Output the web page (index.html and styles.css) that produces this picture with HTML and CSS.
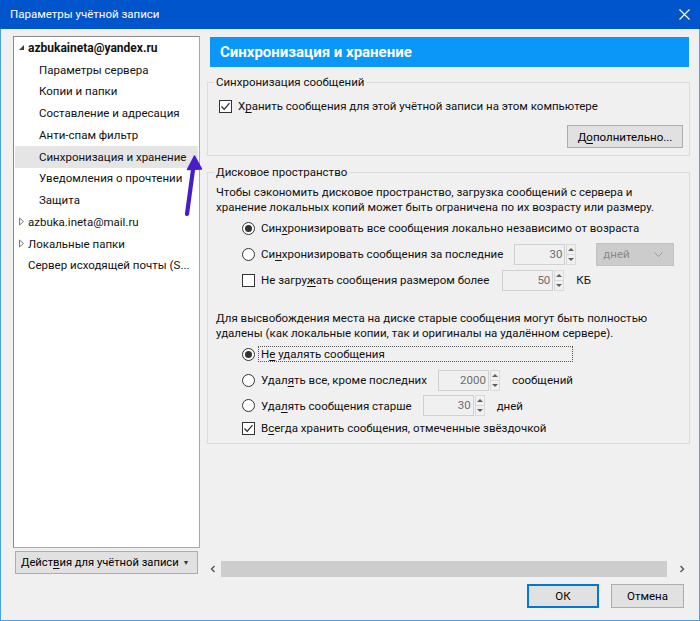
FILE: index.html
```html
<!DOCTYPE html>
<html lang="ru">
<head>
  <meta charset="UTF-8">
  <title>Параметры учётной записи</title>
  <link rel="stylesheet" href="styles.css">
</head>
<body>
  <div class="window">
    <!-- Заголовок окна -->
    <div class="titlebar">
      <span class="title">Параметры учётной записи</span>
      <svg class="close" width="11" height="11" viewBox="0 0 11 11"><path d="M0.5 0.5 L10.5 10.5 M10.5 0.5 L0.5 10.5" stroke="#fff" stroke-width="1.1"/></svg>
    </div>

    <div class="frame">
      <div class="main">
        <!-- Дерево учётных записей -->
        <div class="sidebar">
          <ul class="tree">
            <li class="account open"><span class="twisty"><svg width="7" height="7" viewBox="0 0 7 7"><path d="M6 1 L6 6 L1 6 Z" fill="#3c3c3c"/></svg></span><b>azbukaineta@yandex.ru</b></li>
            <li class="child">Параметры сервера</li>
            <li class="child">Копии и папки</li>
            <li class="child">Составление и адресация</li>
            <li class="child">Анти-спам фильтр</li>
            <li class="child selected">Синхронизация и хранение</li>
            <li class="child">Уведомления о прочтении</li>
            <li class="child">Защита</li>
            <li class="account"><span class="twisty"><svg width="7" height="9" viewBox="0 0 7 9"><path d="M1.5 1 L5.5 4.5 L1.5 8 Z" fill="none" stroke="#7a7a7a"/></svg></span>azbuka.ineta@mail.ru</li>
            <li class="account"><span class="twisty"><svg width="7" height="9" viewBox="0 0 7 9"><path d="M1.5 1 L5.5 4.5 L1.5 8 Z" fill="none" stroke="#7a7a7a"/></svg></span>Локальные папки</li>
            <li class="account"><span class="twisty"></span>Сервер исходящей почты (S...</li>
          </ul>
          <button class="btn actions"><span class="actions-label">Дейст<u>в</u>ия для учётной записи</span><span class="caret">&#9662;</span></button>
        </div>

        <!-- Панель настроек -->
        <div class="pane">
          <div class="pane-header">Синхронизация и хранение</div>

          <fieldset class="group group-sync">
            <legend>Синхронизация сообщений</legend>
            <div class="opt sync-row">
              <span class="check on"><svg width="11" height="11" viewBox="0 0 11 11"><path d="M1.5 5.5 L4.2 8.3 L9.5 2.2" fill="none" stroke="#222" stroke-width="1.2"/></svg></span>
              <span>Х<u>р</u>анить сообщения для этой учётной записи на этом компьютере</span>
            </div>
            <div class="btn-row"><button class="btn">Д<u>о</u>полнительно...</button></div>
          </fieldset>

          <fieldset class="group group-disk">
            <legend>Дисковое пространство</legend>
            <p class="note">Чтобы сэкономить дисковое пространство, загрузка сообщений с сервера и<br>хранение локальных копий может быть ограничена по их возрасту или размеру.</p>

            <div class="opt">
              <span class="radio on"></span>
              <span>Син<u>х</u>ронизировать все сообщения локально независимо от возраста</span>
            </div>
            <div class="opt">
              <span class="radio"></span>
              <span>Си<u>н</u>хронизировать сообщения за последние</span>
              <span class="spin"><span class="spin-field">30</span><span class="spin-arrows"><i class="up"></i><i class="down"></i></span></span>
              <span class="select">дней<svg width="9" height="5" viewBox="0 0 9 5"><path d="M0.5 0.5 L4.5 4.5 L8.5 0.5" fill="none" stroke="#9a9a9a"/></svg></span>
            </div>
            <div class="opt">
              <span class="check"></span>
              <span>Не загру<u>ж</u>ать сообщения размером более</span>
              <span class="spin wide-gap"><span class="spin-field">50</span><span class="spin-arrows"><i class="up"></i><i class="down"></i></span></span>
              <span class="unit">КБ</span>
            </div>

            <p class="note note-purge">Для высвобождения места на диске старые сообщения могут быть полностью<br>удалены (как локальные копии, так и оригиналы на удалённом сервере).</p>

            <div class="opt">
              <span class="radio on"></span>
              <span class="focus">Н<u>е</u> удалять сообщения</span>
            </div>
            <div class="opt">
              <span class="radio"></span>
              <span>Удал<u>я</u>ть все, кроме последних</span>
              <span class="spin"><span class="spin-field">2000</span><span class="spin-arrows"><i class="up"></i><i class="down"></i></span></span>
              <span class="unit">сообщений</span>
            </div>
            <div class="opt short">
              <span class="radio"></span>
              <span>Уда<u>л</u>ять сообщения старше</span>
              <span class="spin"><span class="spin-field">30</span><span class="spin-arrows"><i class="up"></i><i class="down"></i></span></span>
              <span class="unit">дней</span>
            </div>
            <div class="opt last">
              <span class="check on"><svg width="11" height="11" viewBox="0 0 11 11"><path d="M1.5 5.5 L4.2 8.3 L9.5 2.2" fill="none" stroke="#222" stroke-width="1.2"/></svg></span>
              <span>В<u>с</u>егда хранить сообщения, отмеченные звёздочкой</span>
            </div>
          </fieldset>

          <!-- Горизонтальная полоса прокрутки -->
          <div class="hscroll">
            <span class="sb-btn"><svg width="6" height="8" viewBox="0 0 6 8"><path d="M4.5 1 L1.5 4 L4.5 7" fill="none" stroke="#555" stroke-width="1.4"/></svg></span>
            <span class="sb-track"><span class="sb-thumb"></span></span>
            <span class="sb-btn"><svg width="6" height="8" viewBox="0 0 6 8"><path d="M1.5 1 L4.5 4 L1.5 7" fill="none" stroke="#555" stroke-width="1.4"/></svg></span>
          </div>
        </div>
      </div>

      <div class="footer">
        <button class="btn dialog-btn default">ОК</button>
        <button class="btn dialog-btn">Отмена</button>
      </div>
    </div>

    <!-- Стрелка-указатель -->
    <svg class="pointer-arrow" width="30" height="70" viewBox="0 0 30 70">
      <path d="M13.5 16 L7 64" stroke="#4a1cc9" stroke-width="4.2" stroke-linecap="round" fill="none"/>
      <path d="M14.5 6 L7.5 19.5 L21.5 19 Z" fill="#4a1cc9" stroke="#4a1cc9" stroke-width="1.5" stroke-linejoin="round"/>
    </svg>
  </div>
</body>
</html>
```

FILE: styles.css
```css
* {
  margin: 0;
  padding: 0;
  box-sizing: border-box;
}

body {
  width: 700px;
  height: 621px;
  overflow: hidden;
  background: #f0f0f0;
  font-family: "Segoe UI", Roboto, "Noto Sans", sans-serif;
  font-size: 11.5px;
  color: #000;
}

u {
  text-decoration-thickness: 1px;
  text-underline-offset: 2px;
}

.window {
  position: relative;
  height: 621px;
  display: flex;
  flex-direction: column;
}

/* Заголовок окна */
.titlebar {
  height: 29px;
  flex: none;
  background: #0055cc;
  color: #fff;
  display: flex;
  align-items: center;
  justify-content: space-between;
  padding: 0 10px 1px 10px;
}

.frame {
  flex: 1;
  display: flex;
  flex-direction: column;
  border: 1px solid #4aa1e4;
  border-top: none;
}

.main {
  height: 548px;
  display: flex;
  gap: 7px;
  padding: 7px 9px 0 12px;
}

/* Левая колонка с деревом */
.sidebar {
  width: 187px;
  flex: none;
  display: flex;
  flex-direction: column;
}

.tree {
  list-style: none;
  height: 512px;
  background: #fff;
  border: 1px solid #8a8a8a;
  border-right-color: #a8a8a8;
  border-bottom-color: #a8a8a8;
  overflow: hidden;
}

.tree li {
  height: 21.75px;
  display: flex;
  align-items: center;
  white-space: nowrap;
  color: #111;
}

.tree .account {
  padding-left: 4px;
}

.tree .twisty {
  width: 10px;
  display: flex;
  align-items: center;
}

.tree b {
  font-size: 12px;
  font-weight: 700;
}

.tree .child {
  padding-left: 25px;
}

.tree .selected {
  background: #e5e5e5;
  margin: 0 1px;
  padding-left: 24px;
}

/* Кнопки */
.btn {
  font: inherit;
  color: #000;
  background: #e1e1e1;
  border: 1px solid #adadad;
  height: 23px;
  padding: 0 8px;
  white-space: nowrap;
}

.actions {
  margin: 3px 2px 0 2px;
  padding: 0 9px 0 5px;
  display: flex;
  align-items: center;
  justify-content: space-between;
}

.actions-label {
  font-size: 11.2px;
}

.actions .caret {
  font-size: 8px;
  color: #333;
}

/* Правая панель */
.pane {
  flex: 1;
  min-width: 0;
  display: flex;
  flex-direction: column;
}

.pane-header {
  height: 30px;
  margin: 1px 1px 0 3px;
  background: #0a97f7;
  color: #fff;
  font-size: 15px;
  font-weight: 700;
  display: flex;
  align-items: center;
  padding-left: 10px;
}

.group {
  border: 1px solid #dcdcdc;
  padding: 0 6px;
  min-width: 0;
}

.group legend {
  padding: 0 2px;
  line-height: 16px;
  color: #111;
}

.group-sync {
  margin-top: 7px;
  padding-top: 6px;
  padding-bottom: 7px;
}

.group-disk {
  margin-top: 8px;
  padding-top: 5px;
  padding-bottom: 5px;
}

.note {
  margin-left: 2px;
  line-height: 15px;
  white-space: nowrap;
  color: #111;
}

.note-purge {
  margin-top: 18px;
}

.opt {
  height: 26px;
  display: flex;
  align-items: center;
  margin-left: 28px;
  white-space: nowrap;
  color: #111;
}

.opt.short {
  height: 25px;
}

.opt.last {
  height: 20px;
}

.sync-row {
  height: 20px;
  margin-left: 5px;
}

.btn-row {
  display: flex;
  justify-content: flex-end;
  margin-top: 9px;
}

.btn-row .btn {
  width: 116px;
}

/* Флажки и переключатели */
.check,
.radio {
  width: 13px;
  height: 13px;
  flex: none;
  border: 1px solid #333;
  background: #fff;
  margin-right: 6px;
  display: flex;
  align-items: center;
  justify-content: center;
}

.radio {
  border-radius: 50%;
}

.radio.on::after {
  content: "";
  width: 7px;
  height: 7px;
  border-radius: 50%;
  background: #333;
}

.focus {
  display: inline-block;
  width: 315px;
  height: 16px;
  line-height: 14px;
  margin-left: -3px;
  padding-left: 2px;
  border: 1px dotted #555;
}

/* Поле со счётчиком */
.spin {
  display: flex;
  align-items: stretch;
  height: 21px;
  margin-left: 11px;
}

.spin.wide-gap {
  margin-left: 13px;
}

.spin-field {
  width: 51px;
  border: 1px solid #d0d0d0;
  background: #f0f0f0;
  color: #6d6d6d;
  text-align: right;
  padding-right: 2px;
  line-height: 19px;
}

.spin-arrows {
  width: 10px;
  margin-left: 1px;
  display: flex;
  flex-direction: column;
  border: 1px solid #dadada;
}

.spin-arrows i {
  flex: 1;
  display: flex;
  align-items: center;
  justify-content: center;
}

.spin-arrows .up {
  border-bottom: 1px solid #dadada;
}

.spin-arrows .up::after,
.spin-arrows .down::after {
  content: "";
  border-left: 3px solid transparent;
  border-right: 3px solid transparent;
}

.spin-arrows .up::after {
  border-bottom: 3px solid #606060;
}

.spin-arrows .down::after {
  border-top: 3px solid #606060;
}

.select {
  width: 78px;
  height: 23px;
  margin-left: 20px;
  background: #cccccc;
  border: 1px solid #c2c2c2;
  color: #8a8a8a;
  display: flex;
  align-items: center;
  justify-content: space-between;
  padding: 0 10px 0 6px;
}

.unit {
  margin-left: 12px;
}

/* Горизонтальная прокрутка */
.hscroll {
  margin-top: auto;
  margin-left: -2px;
  height: 16px;
  display: flex;
}

.sb-btn {
  width: 16px;
  display: flex;
  align-items: center;
  justify-content: center;
}

.sb-track {
  flex: 1;
  display: flex;
  padding-right: 7px;
}

.sb-thumb {
  flex: 1;
  background: #cdcdcd;
}

/* Нижние кнопки */
.footer {
  display: flex;
  justify-content: flex-end;
  gap: 12px;
  padding: 7px 15px 0 0;
}

.dialog-btn {
  width: 72px;
  height: 24px;
  text-align: center;
}

.dialog-btn.default {
  border: 2px solid #0078d7;
}

.dialog-btn + .dialog-btn {
  width: 73px;
}

.pointer-arrow {
  position: absolute;
  left: 180px;
  top: 150px;
}
```
